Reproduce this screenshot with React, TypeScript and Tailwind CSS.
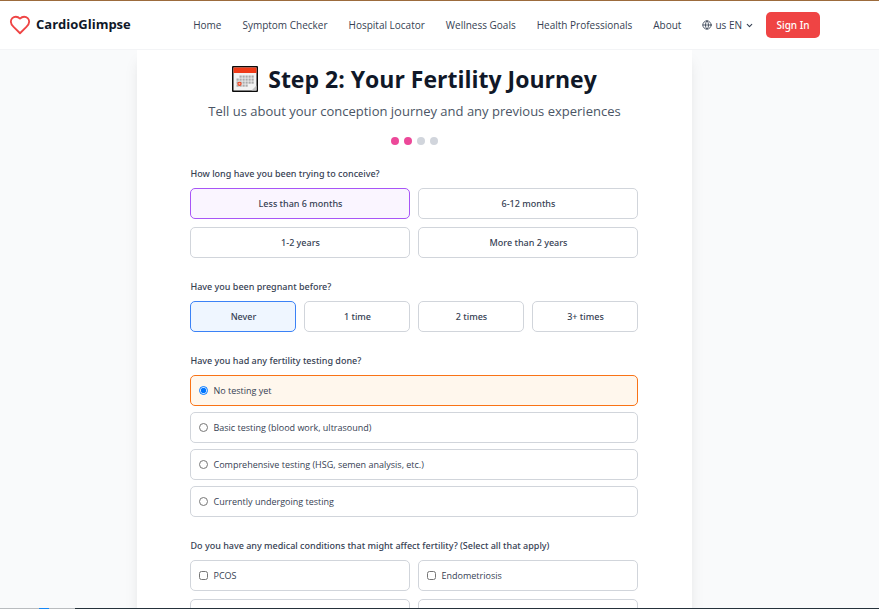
import { useState } from 'react';
import type { ReactNode } from 'react';
import { ChevronDown, Globe } from 'lucide-react';

const navLinks = [
  'Home',
  'Symptom Checker',
  'Hospital Locator',
  'Wellness Goals',
  'Health Professionals',
  'About',
];
const durations = ['Less than 6 months', '6-12 months', '1-2 years', 'More than 2 years'];
const pregnancies = ['Never', '1 time', '2 times', '3+ times'];
const tests = [
  'No testing yet',
  'Basic testing (blood work, ultrasound)',
  'Comprehensive testing (HSG, semen analysis, etc.)',
  'Currently undergoing testing',
];
const conditions = ['PCOS', 'Endometriosis', 'Thyroid disorders', 'Diabetes'];

function HeartIcon() {
  return (
    <svg
      viewBox="0 0 24 24"
      className="size-[22px] shrink-0 text-[#ef4444]"
      fill="none"
      stroke="currentColor"
      strokeWidth="2"
      strokeLinecap="round"
      strokeLinejoin="round"
      aria-hidden="true"
    >
      <path d="M19 14c1.49-1.46 3-3.21 3-5.5A5.5 5.5 0 0 0 16.5 3c-1.76 0-3 .5-4.5 2-1.5-1.5-2.74-2-4.5-2A5.5 5.5 0 0 0 2 8.5c0 2.3 1.5 4.05 3 5.5l7 7Z" />
    </svg>
  );
}

function CalendarIcon() {
  const cells: ReactNode[] = [];
  for (let row = 0; row < 4; row++) {
    for (let col = 0; col < 6; col++) {
      if ((row === 0 && col < 1) || (row === 3 && col > 3)) continue;
      cells.push(
        <rect key={`${row}-${col}`} x={4.5 + col * 3} y={9.5 + row * 3} width="2.2" height="2.2" fill="#aaa" />,
      );
    }
  }
  return (
    <svg viewBox="0 0 26 26" className="size-[26px] shrink-0" aria-hidden="true">
      <rect width="26" height="26" rx="1" fill="#0b0b0b" />
      <rect x="1.5" y="1.5" width="23" height="23" fill="#f2f2f2" />
      <rect x="1.5" y="1.5" width="23" height="5.5" fill="#f03a17" />
      {cells}
      <circle cx="7.5" cy="17.8" r="1.6" fill="#f6b49e" stroke="#f0431f" strokeWidth="1.1" />
      <path d="M24.5 19.5v5h-5z" fill="#c4c4c4" />
    </svg>
  );
}

function Header() {
  return (
    <header className="border-b border-gray-100 bg-white">
      <div className="mr-[59px] flex h-12 items-center justify-between pl-[9px]">
        <a href="#home" className="flex items-center gap-[5px] text-gray-900">
          <HeartIcon />
          <span className="text-[13px] font-bold">CardioGlimpse</span>
        </a>
        <div className="flex items-center gap-3">
          <nav className="flex items-center gap-[21px] text-[10px] text-gray-700">
            {navLinks.map((link) => (
              <a key={link} href="#top" className="whitespace-nowrap">
                {link}
              </a>
            ))}
            <button type="button" className="flex items-center whitespace-nowrap">
              <Globe className="mr-[3px] size-[10px]" />
              us EN
              <ChevronDown className="ml-[3px] size-[9px]" strokeWidth={3} />
            </button>
          </nav>
          <button
            type="button"
            className="h-[26px] w-[54px] rounded-[5px] bg-[#ef4444] font-['Noto_Sans','Open_Sans',sans-serif] text-[10px] font-medium whitespace-nowrap text-white"
          >
            Sign In
          </button>
        </div>
      </div>
    </header>
  );
}

function Question({ title, children }: { title: string; children: ReactNode }) {
  return (
    <fieldset>
      <legend className="mb-[6px] font-['Noto_Sans','Open_Sans',sans-serif] text-[9px] leading-4 font-medium text-gray-700">
        {title}
      </legend>
      {children}
    </fieldset>
  );
}

const boxBase = 'h-[31px] rounded-[5px] border text-[9px]';
const choice = "font-['Noto_Sans','Open_Sans',sans-serif] font-medium text-gray-700";
const plain = 'border-[#d1d5db] bg-white';

export default function App() {
  const [duration, setDuration] = useState(durations[0]);
  const [pregnancy, setPregnancy] = useState(pregnancies[0]);
  const [test, setTest] = useState(tests[0]);

  return (
    <div className="flex h-screen flex-col overflow-hidden bg-gray-50 font-['Open_Sans','Noto_Sans',sans-serif]">
      <div className="h-px shrink-0 bg-[#9c6b3c]" />
      <Header />
      <main className="min-h-0 flex-1 overflow-hidden pr-[50px]">
        <div className="mx-auto w-[67%] min-w-[500px] bg-white px-[53px] pt-[15px] pb-8 shadow-lg">
          <div className="mx-auto w-full max-w-md">
            <h1 className="flex items-center justify-center gap-[10px] text-[23px] leading-7 font-bold whitespace-nowrap text-gray-900">
              <CalendarIcon />
              Step 2: Your Fertility Journey
            </h1>
            <p className="mt-2 text-center text-[13px] leading-5 whitespace-nowrap text-gray-600">
              Tell us about your conception journey and any previous experiences
            </p>
            <div className="mt-4 mb-[21px] flex justify-center gap-[5px]">
              <span className="size-2 rounded-full bg-[#ec4899]" />
              <span className="size-2 rounded-full bg-[#ec4899]" />
              <span className="size-2 rounded-full bg-gray-300" />
              <span className="size-2 rounded-full bg-gray-300" />
            </div>
            <form className="flex flex-col gap-[21px]">
              <Question title="How long have you been trying to conceive?">
                <div className="grid grid-cols-2 gap-2">
                  {durations.map((item) => (
                    <button
                      key={item}
                      type="button"
                      aria-pressed={item === duration}
                      onClick={() => setDuration(item)}
                      className={`${boxBase} ${choice} ${item === duration ? 'border-[#a855f7] bg-purple-50' : plain}`}
                    >
                      {item}
                    </button>
                  ))}
                </div>
              </Question>
              <Question title="Have you been pregnant before?">
                <div className="grid grid-cols-4 gap-2">
                  {pregnancies.map((item) => (
                    <button
                      key={item}
                      type="button"
                      aria-pressed={item === pregnancy}
                      onClick={() => setPregnancy(item)}
                      className={`${boxBase} ${choice} ${item === pregnancy ? 'border-[#3b82f6] bg-blue-50' : plain}`}
                    >
                      {item}
                    </button>
                  ))}
                </div>
              </Question>
              <Question title="Have you had any fertility testing done?">
                <div className="flex flex-col gap-[6px]">
                  {tests.map((item) => (
                    <label
                      key={item}
                      className={`${boxBase} flex items-center gap-[5px] px-2 text-gray-700 ${item === test ? 'border-[#f97316] bg-orange-50' : plain}`}
                    >
                      <input
                        type="radio"
                        name="testing"
                        checked={item === test}
                        onChange={() => setTest(item)}
                        className="size-[9px]"
                      />
                      {item}
                    </label>
                  ))}
                </div>
              </Question>
              <Question title="Do you have any medical conditions that might affect fertility? (Select all that apply)">
                <div className="grid grid-cols-2 gap-2">
                  {conditions.map((item) => (
                    <label
                      key={item}
                      className={`${boxBase} ${plain} flex items-center gap-[5px] px-2 text-gray-700`}
                    >
                      <input type="checkbox" className="size-[9px]" />
                      {item}
                    </label>
                  ))}
                </div>
              </Question>
            </form>
          </div>
        </div>
      </main>
      <div className="flex h-px shrink-0 bg-[#26323b]">
        <div className="flex w-[75px] justify-center bg-[#b9bcbf] pl-3">
          <div className="w-[10px] bg-[#1687f5]" />
        </div>
      </div>
    </div>
  );
}
